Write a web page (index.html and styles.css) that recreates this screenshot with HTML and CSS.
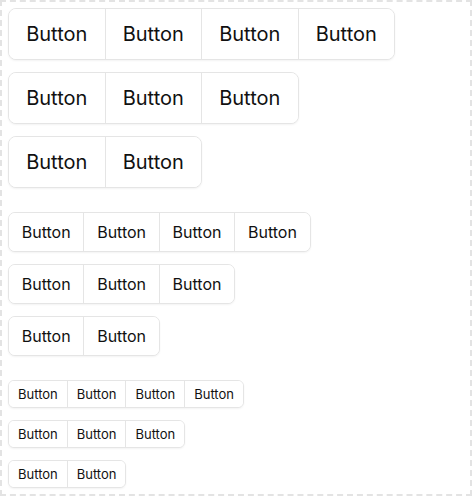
FILE: index.html
```html
<!DOCTYPE html>
<html>
<head>
<meta charset="utf-8">
<link rel="stylesheet" href="styles.css">
</head>
<body>
<div class="frame">
  <div class="size">
    <div class="group lg"><button>Button</button><button>Button</button><button>Button</button><button>Button</button></div>
    <div class="group lg"><button>Button</button><button>Button</button><button>Button</button></div>
    <div class="group lg"><button>Button</button><button>Button</button></div>
  </div>
  <div class="size">
    <div class="group md"><button>Button</button><button>Button</button><button>Button</button><button>Button</button></div>
    <div class="group md"><button>Button</button><button>Button</button><button>Button</button></div>
    <div class="group md"><button>Button</button><button>Button</button></div>
  </div>
  <div class="size">
    <div class="group sm"><button>Button</button><button>Button</button><button>Button</button><button>Button</button></div>
    <div class="group sm"><button>Button</button><button>Button</button><button>Button</button></div>
    <div class="group sm"><button>Button</button><button>Button</button></div>
  </div>
</div>
</body>
</html>
```
FILE: styles.css
```css
* { box-sizing: border-box; }
html, body { margin: 0; padding: 0; background: #fff; }
.frame {
  width: 472px;
  height: 496px;
  border: 2px dashed #e3e3e3;
  padding: 6px;
  display: flex;
  flex-direction: column;
  align-items: flex-start;
  gap: 24px;
  font-family: Inter, "Noto Sans", sans-serif;
}
.size {
  display: flex;
  flex-direction: column;
  align-items: flex-start;
  gap: 12px;
}
.group {
  display: inline-flex;
  border: 1px solid #e5e5e5;
  border-radius: 8px;
  background: #fff;
  box-shadow: 0 1px 2px rgba(0,0,0,0.05);
  overflow: hidden;
}
.group button {
  font-family: inherit;
  color: #111111;
  background: #fff;
  border: 0;
  border-left: 1px solid #e5e5e5;
  margin: 0;
  font-weight: 400;
}
.group button:first-child { border-left: 0; }
.lg button { height: 50px; padding: 0 17.2px; font-size: 20px; }
.md { border-radius: 7px; }
.md button { height: 38px; padding: 0 12.75px; font-size: 16px; }
.sm { border-radius: 6px; }
.sm button { height: 26px; padding: 0 9px; font-size: 13px; }
```
